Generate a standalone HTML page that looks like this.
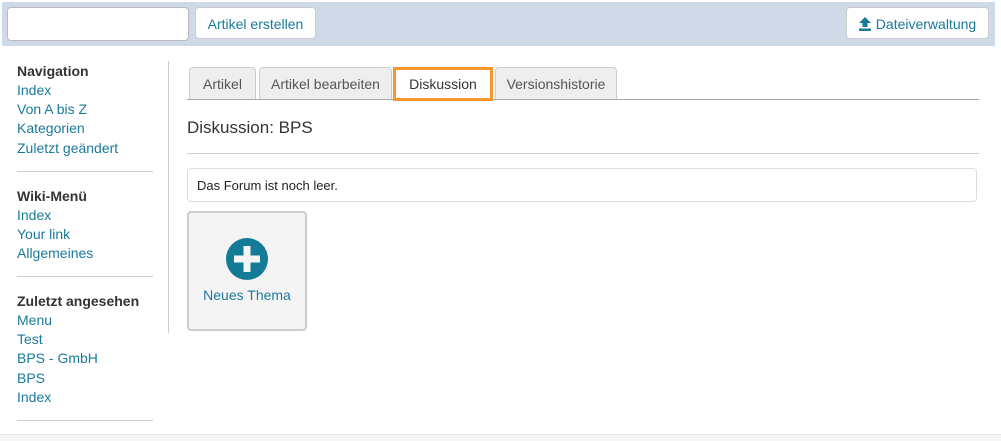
<!DOCTYPE html>
<html><head><meta charset="utf-8"><style>
body{margin:0;width:1001px;height:440px;position:relative;font-family:"Liberation Sans",sans-serif;font-size:14px;background:#fff;overflow:hidden}
.a{position:absolute}
.bar{left:2px;top:2px;width:993px;height:44px;background:#cfd9e8}
.inp{left:7px;top:7px;width:180px;height:32px;border:1px solid #bbb;border-radius:4px;background:#fff}
.btn{top:7px;height:32px;border:1px solid #ccc;border-radius:4px;background:#fff;color:#1a7a9a;line-height:32px;text-align:center;font-size:14px;box-sizing:border-box}
.side div{position:absolute;left:17px;color:#1a7a9a;font-size:14px}
.side b{position:absolute;left:17px;color:#333;font-size:14px}
.hr{position:absolute;left:17px;width:136px;height:1px;background:#ccc}
.tab{position:absolute;top:67px;height:32px;border:1px solid #ccc;border-bottom:none;border-radius:4px 4px 0 0;background:#eee;color:#555;line-height:32px;text-align:center;box-sizing:border-box}
</style></head><body>
<div class="a bar"></div>
<div class="a inp"></div>
<div class="a btn" style="left:195px;width:121px">Artikel erstellen</div>
<div class="a btn" style="left:846px;width:143px"><svg width="12" height="14" viewBox="0 0 12 14" style="vertical-align:-2px;margin-right:5px"><path d="M6 0L12 6H8.5V10H3.5V6H0Z M0 11.5H12V14H0Z" fill="#1a7a9a"/></svg>Dateiverwaltung</div>
<div class="side">
<b style="top:63px">Navigation</b>
<div style="top:82px">Index</div><div style="top:101px">Von A bis Z</div><div style="top:120px">Kategorien</div><div style="top:140px">Zuletzt geändert</div>
<span class="hr" style="top:171px"></span>
<b style="top:188px">Wiki-Menü</b>
<div style="top:207px">Index</div><div style="top:226px">Your link</div><div style="top:245px">Allgemeines</div>
<span class="hr" style="top:276px"></span>
<b style="top:293px">Zuletzt angesehen</b>
<div style="top:312px">Menu</div><div style="top:331px">Test</div><div style="top:350px">BPS - GmbH</div><div style="top:370px">BPS</div><div style="top:389px">Index</div>
<span class="hr" style="top:420px"></span>
</div>
<div class="a" style="left:168px;top:61px;width:1px;height:272px;background:#ccc"></div>
<div class="a" style="left:0;top:434px;width:1001px;height:6px;background:#f7f7f7;border-top:1px solid #e5e5e5"></div>
<div class="a" style="left:187px;top:99px;width:792px;height:1px;background:#aaa"></div>
<div class="tab" style="left:189px;width:67px">Artikel</div>
<div class="tab" style="left:259px;width:133px">Artikel bearbeiten</div>
<div class="tab" style="left:393px;width:100px;height:34px;background:#fff;border:3px solid #f7952f;border-radius:0;color:#333;line-height:28px">Diskussion</div>
<div class="tab" style="left:495px;width:122px">Versionshistorie</div>
<div class="a" style="left:187px;top:118px;font-size:17px;color:#333">Diskussion: BPS</div>
<div class="a" style="left:187px;top:153px;width:792px;height:1px;background:#ccc"></div>
<div class="a" style="left:187px;top:168px;width:790px;height:34px;border:1px solid #ddd;border-radius:4px;line-height:34px;box-sizing:border-box;padding-left:9px;color:#222;font-size:13px">Das Forum ist noch leer.</div>
<div class="a" style="left:187px;top:211px;width:120px;height:120px;border:2px solid #ccc;border-radius:4px;background:#f4f4f4;box-sizing:border-box">
<svg class="a" style="left:37px;top:25px" width="42" height="42" viewBox="0 0 42 42"><circle cx="21" cy="21" r="21" fill="#137b96"/><path d="M17.5 8H24.5V17.5H34V24.5H24.5V34H17.5V24.5H8V17.5H17.5Z" fill="#f4f4f4"/></svg>
<div class="a" style="left:0;width:116px;top:74px;text-align:center;color:#1a7a9a;font-size:14px">Neues Thema</div>
</div>
</body></html>
